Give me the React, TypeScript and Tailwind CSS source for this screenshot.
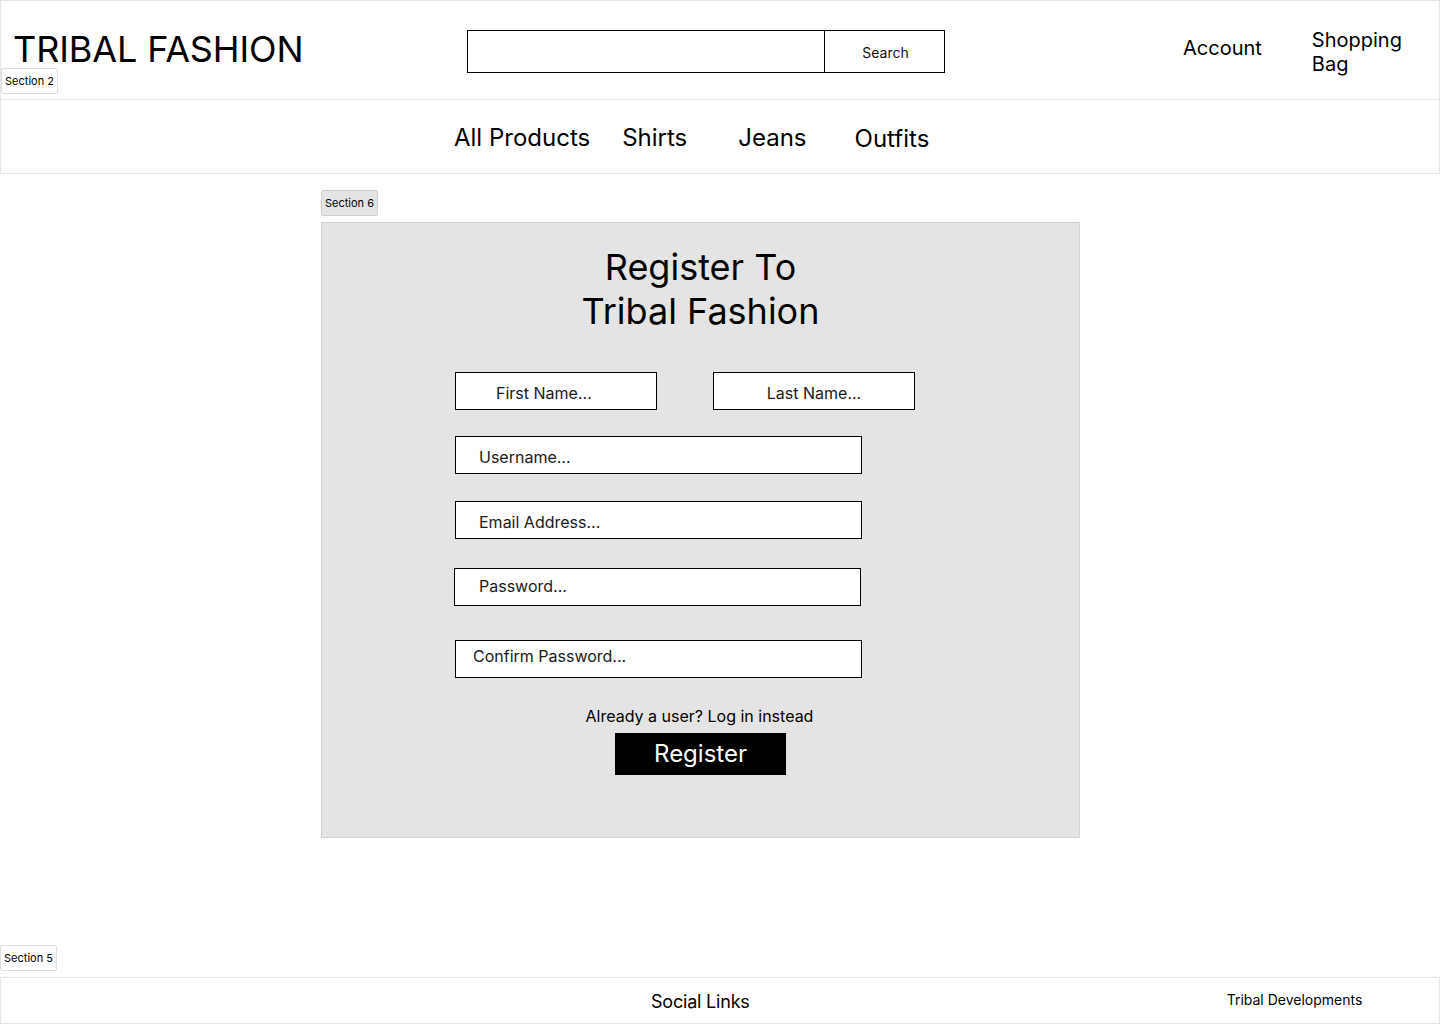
import React from 'react';

const SectionTag: React.FC<{ label: string; shaded?: boolean; className?: string }> = ({ label, shaded, className }) => (
  <div
    className={`h-[26px] w-[57px] flex items-center justify-center rounded-[2px] border text-[11px] leading-none text-black ${
      shaded ? 'bg-[#e4e4e4] border-[#cfcfcf]' : 'bg-white border-[#dedede]'
    } ${className ?? ''}`}
  >
    {label}
  </div>
);

const Field: React.FC<{ placeholder: string; className?: string }> = ({ placeholder, className }) => (
  <div className={`h-[38px] bg-white border-[1.5px] border-black flex items-center text-[16px] text-[#1a1a1a] ${className ?? ''}`}>
    {placeholder}
  </div>
);

export default function App() {
  return (
    <div className="relative w-[1440px] min-h-[1024px] bg-white text-black font-['Inter',sans-serif] flex flex-col">
      {/* Header */}
      <header className="relative h-[100px] border border-[#e6e6e6] flex items-center">
        <h1 className="ml-[12px] w-[454px] text-[36px] leading-none tracking-[-0.1px] -mt-[2px]">TRIBAL FASHION</h1>
        <div className="flex h-[43px] mt-[2px]">
          <div className="w-[358px] border-[1.5px] border-black" />
          <button className="w-[120px] border-[1.5px] border-l-0 border-black text-[14px] text-[#111] pt-[3px] pl-[2px]">Search</button>
        </div>
        <a className="ml-[238px] text-[20px] -mt-[4px]">Account</a>
        <a className="ml-[50px] text-[20px] leading-[24px] w-[100px] mt-[4px]">Shopping Bag</a>
        <SectionTag label="Section 2" className="absolute left-0 top-[67px]" />
      </header>

      {/* Nav */}
      <nav className="h-[74px] border border-[#e6e6e6] border-t-0 flex items-center text-[24px] pt-[2px]">
        <a className="ml-[453px]">All Products</a>
        <a className="ml-[32px]">Shirts</a>
        <a className="ml-[51px]">Jeans</a>
        <a className="ml-[48px] mt-[2px]">Outfits</a>
      </nav>

      {/* Register */}
      <main className="pl-[321px] pt-[16px]">
        <SectionTag label="Section 6" shaded />
        <div className="mt-[6px] w-[759px] h-[616px] bg-[#e4e4e4] border border-[#d2d2d2] flex flex-col">
          <h2 className="mt-[22px] text-center text-[36px] leading-[44px]">
            Register To
            <br />
            Tribal Fashion
          </h2>
          <div className="mt-[39px] pl-[133px] flex flex-col">
            <div className="flex">
              <Field placeholder="First Name..." className="w-[202px] pl-[40px] pt-[4px]" />
              <Field placeholder="Last Name..." className="w-[202px] ml-[56px] justify-center pt-[4px]" />
            </div>
            <Field placeholder="Username..." className="w-[407px] mt-[26px] pl-[23px] pt-[4px]" />
            <Field placeholder="Email Address..." className="w-[407px] mt-[27px] pl-[23px] pt-[4px]" />
            <Field placeholder="Password..." className="w-[407px] mt-[29px] -ml-[1px] pl-[24px] pb-[2px]" />
            <Field placeholder="Confirm Password..." className="w-[407px] mt-[34px] pl-[17px] pb-[7px]" />
          </div>
          <p className="mt-[28px] text-center text-[16px] leading-[20px] pr-[2px]">Already a user? Log in instead</p>
          <button className="mx-auto mt-[7px] w-[171px] h-[42px] bg-black text-white text-[24px] leading-none">Register</button>
        </div>
      </main>

      {/* Footer */}
      <SectionTag label="Section 5" className="mt-[107px]" />
      <footer className="mt-[6px] h-[47px] border border-[#e6e6e6] flex items-center">
        <span className="ml-[650px] text-[18px] tracking-[-0.2px] mt-[2px]">Social Links</span>
        <span className="ml-[477px] text-[14px] -mt-[2px]">Tribal Developments</span>
      </footer>
    </div>
  );
}
